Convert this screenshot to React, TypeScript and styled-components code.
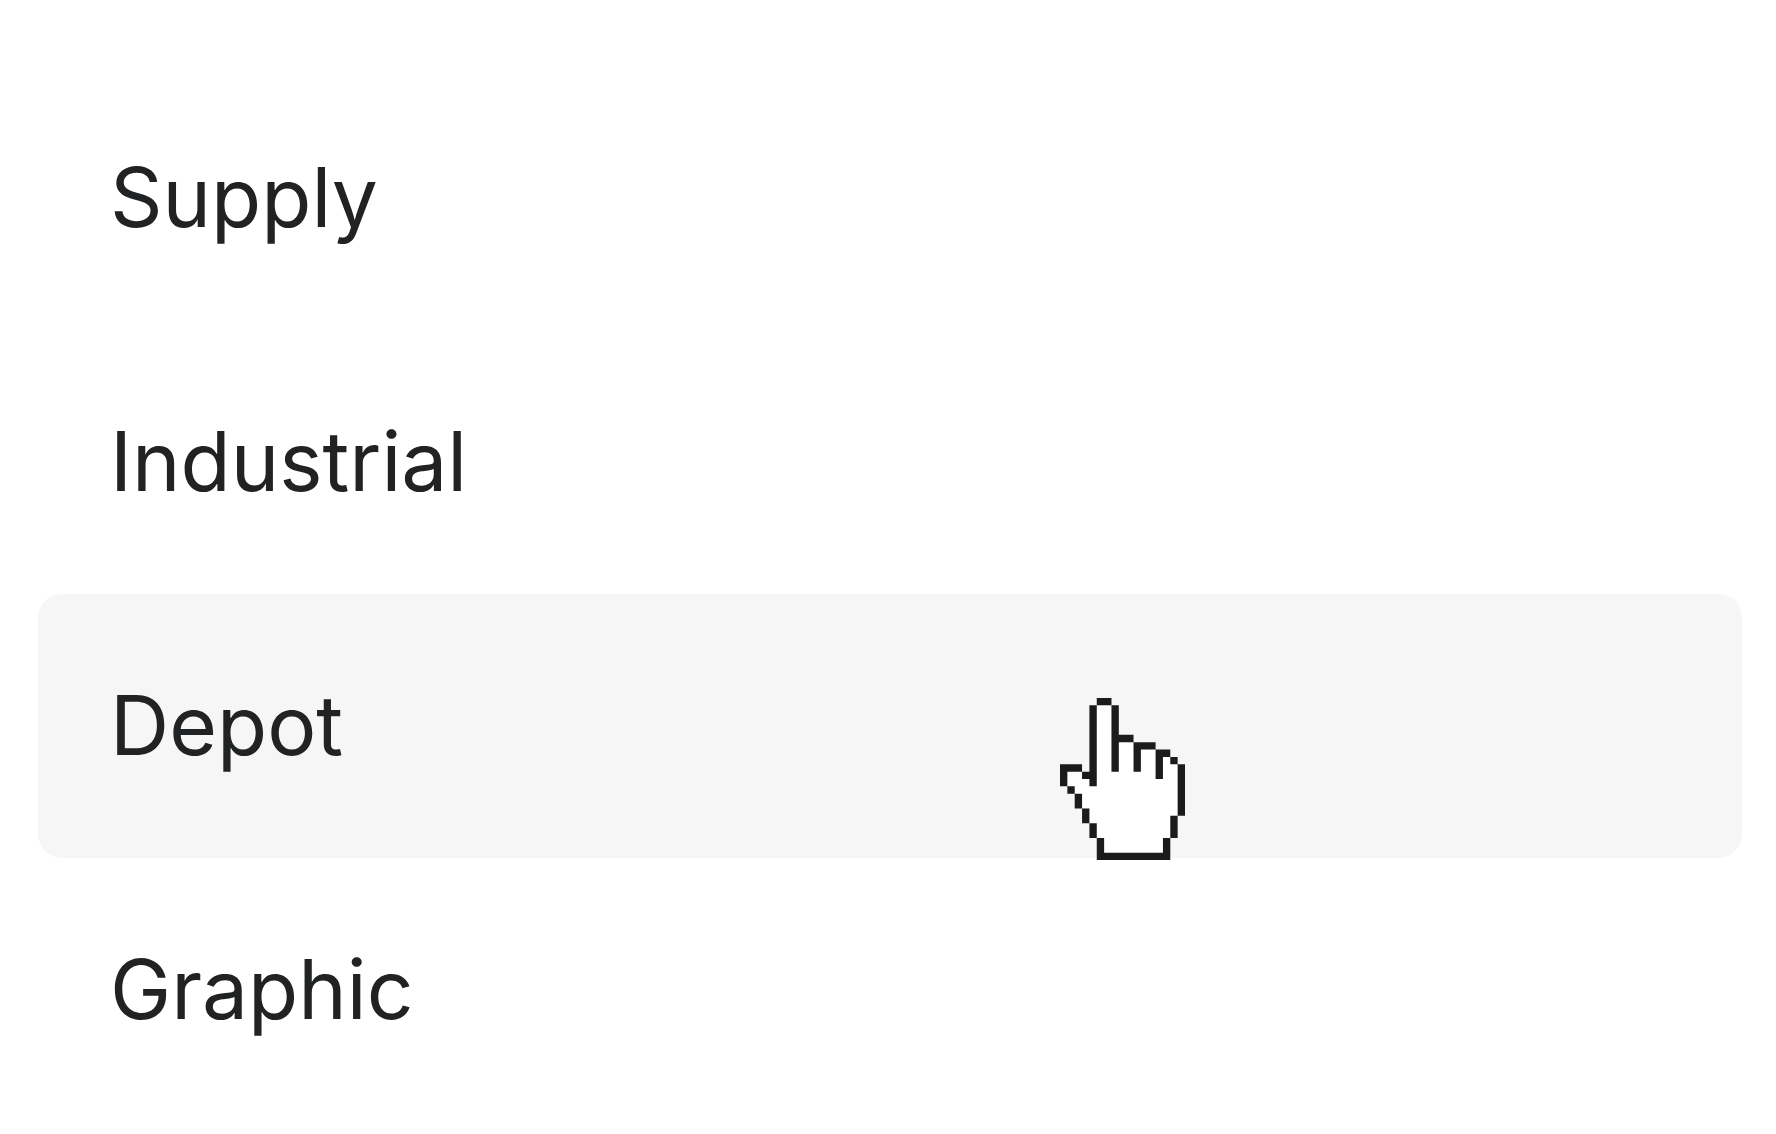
import React from "react";
import styled, { createGlobalStyle } from "styled-components";

const GlobalStyle = createGlobalStyle`
  *, *::before, *::after {
    box-sizing: border-box;
  }

  body {
    margin: 0;
    background: #ffffff;
    color: #202223;
    font-family: Inter, "Liberation Sans", sans-serif;
  }
`;

const Menu = styled.ul`
  display: flex;
  flex-direction: column;
  margin: 0;
  padding: 66px 34px 12px 38px;
  list-style: none;
`;

const MenuItem = styled.li`
  position: relative;
  display: flex;
`;

const MenuButton = styled.button<{ $active: boolean }>`
  flex: 1;
  padding: 82px 72px;
  border: 0;
  border-radius: 24px;
  background: ${({ $active }) => ($active ? "#f6f6f6" : "transparent")};
  color: inherit;
  font-family: inherit;
  font-size: 82px;
  font-weight: 400;
  line-height: 100px;
  text-align: left;
  cursor: pointer;
`;

const Pointer = styled.svg`
  position: absolute;
  top: 104px;
  left: 60%;
  width: 125px;
  height: 162px;
  pointer-events: none;
`;

function HandPointer() {
  return (
    <Pointer viewBox="0 0 17 22" preserveAspectRatio="none" aria-hidden="true">
      <path
        fill="#ffffff"
        d="M5 1H7V6H10V7H13V8H15V9H16V16H15V19H14V21H6V19H5V17H4V15H3V13H2V12H1V10H3V11H5Z"
      />
      <path
        fill="#1b1b1b"
        d="M5 0h2v1h-2zM4 1h1v11h-1v-1h-1v-1h1zM7 1h1v4h2v1h-2v4h-1zM10 6h3v1h-2v3h-1zM13 7h2v1h-1v3h-1zM15 8h1v1h-1zM16 9h1v7h-1zM15 16h1v3h-1zM0 9h3v1h-2v2h-1zM1 12h1v1h-1zM2 13h1v2h-1zM3 15h1v2h-1zM4 17h1v2h-1zM5 19h1v2h8v-2h1v3h-10z"
      />
    </Pointer>
  );
}

const categories = ["Supply", "Industrial", "Depot", "Graphic"];
const hovered = "Depot";

export default function App() {
  return (
    <>
      <GlobalStyle />
      <Menu>
        {categories.map((name) => (
          <MenuItem key={name}>
            <MenuButton type="button" $active={name === hovered}>
              {name}
            </MenuButton>
            {name === hovered && <HandPointer />}
          </MenuItem>
        ))}
      </Menu>
    </>
  );
}
